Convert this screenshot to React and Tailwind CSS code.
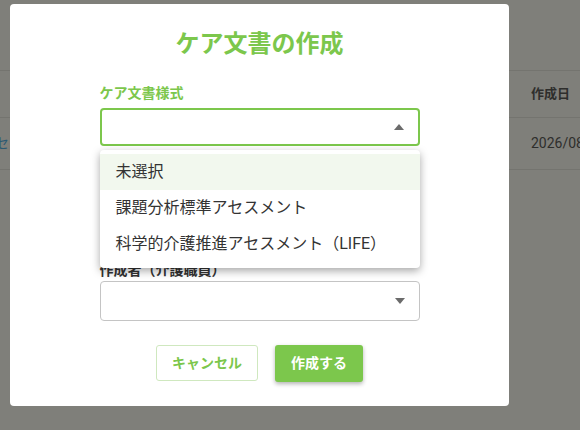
const green = '#7cc74c';

const Caret = ({ up }) => (
  <svg width="10" height="6" viewBox="0 0 10 6" className="block">
    {up ? <path d="M0 6 L5 0 L10 6 Z" fill="#6b6b6b" /> : <path d="M0 0 L5 6 L10 0 Z" fill="#6b6b6b" />}
  </svg>
);

export default function App() {
  const opciones = ['未選択', '課題分析標準アセスメント', '科学的介護推進アセスメント（LIFE）'];

  return (
    <div
      className="relative w-[580px] h-[430px] overflow-hidden bg-[#7f7f7a]"
      style={{ fontFamily: "Roboto, 'Noto Sans CJK JP', sans-serif" }}
    >
      {/* Fondo: tabla detrás del modal */}
      <div className="pt-[70px]">
        <div className="h-[48px] border-t border-b border-[#74746f] flex items-center justify-end pr-[8px]">
          <span className="text-[13px] font-bold text-[#2e2e2c] w-[41px]">作成日</span>
        </div>
        <div className="h-[52px] border-b border-[#74746f] flex items-center justify-between">
          <span className="text-[14px] text-[#2c5a73] -ml-[5px] whitespace-nowrap">セスメント</span>
          <span className="text-[14px] text-[#2e2e2c] w-[49px] whitespace-nowrap">2026/08</span>
        </div>
      </div>

      {/* Modal */}
      <div className="absolute left-[10px] top-[4px] w-[499px] h-[402px] bg-white rounded-[4px] flex flex-col items-center">
        <h2 className="mt-[24px] text-[24px] leading-[32px] font-bold" style={{ color: green }}>
          ケア文書の作成
        </h2>

        <div className="w-[320px] mt-[23px] relative">
          <label className="block text-[14px] leading-[20px] font-bold" style={{ color: green }}>
            ケア文書様式
          </label>
          <div
            className="mt-[5px] h-[38px] rounded-[4px] border-2 flex items-center justify-end pr-[14px]"
            style={{ borderColor: green }}
          >
            <Caret up />
          </div>

          {/* Menú desplegable */}
          <div className="absolute left-0 top-[67px] w-[320px] bg-white rounded-[4px] shadow-[0_3px_8px_rgba(0,0,0,0.35)] pt-[4px] pb-[6px] z-10">
            {opciones.map((op, i) => (
              <div
                key={op}
                className={`h-[36px] flex items-center px-[16px] text-[16px] text-[#333] ${i === 0 ? 'bg-[#f2f8ee]' : ''}`}
              >
                {op}
              </div>
            ))}
          </div>

          <div className="h-[114px]" />

          <label className="block text-[14px] leading-[20px] font-bold text-[#333]">作成者（介護職員）</label>
          <div className="mt-[1px] h-[40px] rounded-[4px] border border-[#c4c4c4] flex items-center justify-end pr-[14px]">
            <Caret />
          </div>
        </div>

        <div className="mt-[24px] flex gap-[17px]">
          <button
            className="w-[102px] h-[36px] rounded-[3px] border border-[#cfe8bf] bg-white text-[14px] font-bold"
            style={{ color: green }}
          >
            キャンセル
          </button>
          <button
            className="w-[88px] h-[37px] rounded-[3px] text-white text-[14px] font-bold shadow-[0_2px_4px_rgba(0,0,0,0.3)]"
            style={{ backgroundColor: green }}
          >
            作成する
          </button>
        </div>
      </div>
    </div>
  );
}
